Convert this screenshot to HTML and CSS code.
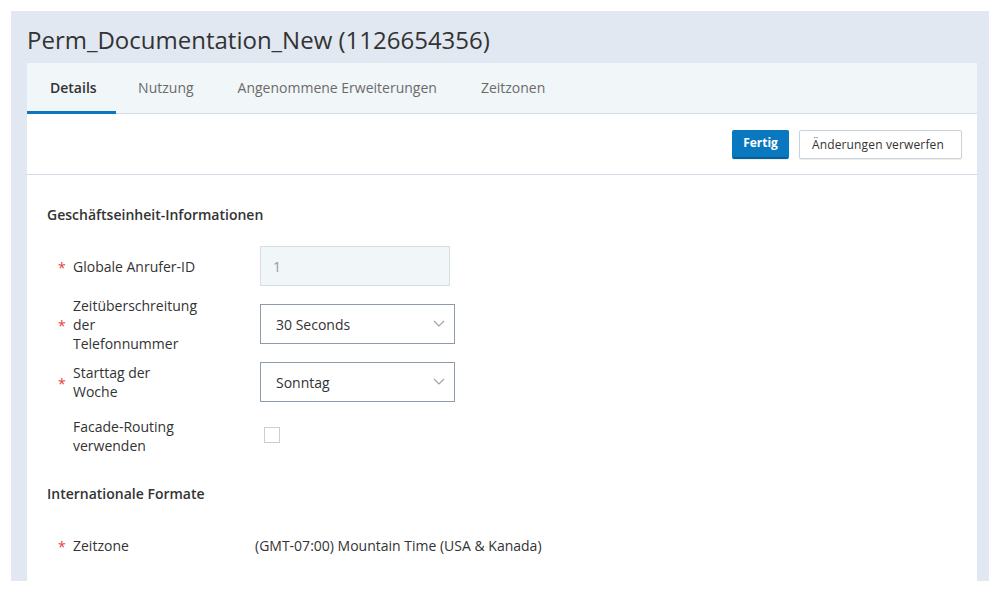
FILE: index.html
```html
<!DOCTYPE html>
<html lang="de">

<head>
        <meta charset="UTF-8">
        <meta name="viewport" content="width=device-width, initial-scale=1.0">
        <title>Perm_Documentation_New</title>
        <link rel="stylesheet" href="styles.css">
</head>

<body>
        <div class="page">
                <h1 class="title">Perm_Documentation_New (1126654356)</h1>

                <div class="card">
                        <nav class="tabs">
                                <a class="tab active">Details</a>
                                <a class="tab">Nutzung</a>
                                <a class="tab">Angenommene Erweiterungen</a>
                                <a class="tab">Zeitzonen</a>
                        </nav>

                        <div class="toolbar">
                                <button class="btn btn-primary">Fertig</button>
                                <button class="btn btn-secondary">Änderungen verwerfen</button>
                        </div>

                        <div class="content">
                                <h2>Geschäftseinheit-Informationen</h2>

                                <div class="row">
                                        <span class="req">*</span>
                                        <label>Globale Anrufer-ID</label>
                                        <input class="field" type="text" value="1" disabled>
                                </div>

                                <div class="row">
                                        <span class="req">*</span>
                                        <label>Zeitüberschreitung der Telefonnummer</label>
                                        <div class="select">
                                                <span>30 Seconds</span>
                                                <svg width="12" height="7" viewBox="0 0 12 7"><path d="M1 1l5 5 5-5" fill="none" stroke="#9aa5b0" stroke-width="1.2"/></svg>
                                        </div>
                                </div>

                                <div class="row">
                                        <span class="req">*</span>
                                        <label>Starttag der<br>Woche</label>
                                        <div class="select">
                                                <span>Sonntag</span>
                                                <svg width="12" height="7" viewBox="0 0 12 7"><path d="M1 1l5 5 5-5" fill="none" stroke="#9aa5b0" stroke-width="1.2"/></svg>
                                        </div>
                                </div>

                                <div class="row short">
                                        <span class="req"></span>
                                        <label>Facade-Routing verwenden</label>
                                        <span class="checkbox"></span>
                                </div>

                                <h2 class="second">Internationale Formate</h2>

                                <div class="row">
                                        <span class="req">*</span>
                                        <label>Zeitzone</label>
                                        <span class="value">(GMT-07:00) Mountain Time (USA &amp; Kanada)</span>
                                </div>
                        </div>
                </div>
        </div>
</body>

</html>
```

FILE: styles.css
```css
body {
        font-family: "Open Sans", "Noto Sans", Arial, sans-serif;
        background-color: #fff;
        color: #333;
        margin: 0;
        padding: 11px 10px 12px 11px;
}

.page {
        background-color: #e1e8f1;
        padding: 0 12px 0 16px;
        height: 570px;
        overflow: hidden;
}

.title {
        font-size: 24px;
        font-weight: 400;
        margin: 0;
        padding: 13px 0 8px 0;
        line-height: 31px;
        color: #333;
}

.card {
        background-color: #fff;
}

.tabs {
        display: flex;
        height: 50px;
        background-color: #f1f6f9;
        border-bottom: 1px solid #d5dee6;
}

.tab {
        display: flex;
        align-items: center;
        padding: 1px 21.5px 0 22.5px;
        font-size: 14px;
        color: #6b6b6b;
        border-bottom: 3px solid transparent;
        margin-bottom: -1px;
}

.tab.active {
        font-weight: 600;
        color: #333;
        border-bottom-color: #0a78be;
        padding-left: 23px;
        padding-right: 19px;
}

.toolbar {
        display: flex;
        justify-content: flex-end;
        gap: 10px;
        padding: 16px 15px 15px 0;
        border-bottom: 1px solid #d0dbe6;
}

.btn {
        font-family: inherit;
        font-size: 12px;
        height: 29px;
        padding: 0 11px;
        background-color: #fff;
        border: 1px solid #c9d3dc;
        border-radius: 2px;
        color: #333;
        box-shadow: 0 1px 1px rgba(0, 0, 0, 0.08);
}

.btn-primary {
        background-color: #0a78be;
        border-color: #0a78be;
        border-bottom: 2px solid #065f99;
        color: #fff;
        font-weight: 700;
        padding: 0 10px 3px 10px;
}

.btn-secondary {
        padding: 0 17px 0 12px;
        letter-spacing: 0.15px;
}

.content {
        padding: 30px 20px 20px 20px;
}

.content h2 {
        font-size: 14px;
        font-weight: 600;
        margin: 0 0 12px 0;
        line-height: 20px;
        color: #333;
}

.content h2.second {
        margin-top: 23px;
        margin-bottom: 12px;
}

.row {
        display: flex;
        align-items: center;
        min-height: 58px;
        padding-left: 11px;
        font-size: 14px;
}

.row.short {
        min-height: 50px;
}

.req {
        width: 15px;
        color: #e8403a;
        font-size: 14px;
        padding-top: 3px;
}

.row label {
        width: 126px;
        margin-right: 61px;
        line-height: 19px;
        color: #333;
}

.field {
        width: 190px;
        height: 40px;
        box-sizing: border-box;
        border: 1px solid #d5dee4;
        background-color: #f1f6f9;
        font-family: inherit;
        font-size: 14px;
        color: #999;
        padding: 0 12px;
}

.select {
        width: 195px;
        height: 40px;
        box-sizing: border-box;
        border: 1px solid #8c9cab;
        display: flex;
        align-items: center;
        justify-content: space-between;
        padding: 0 9px 0 15px;
        color: #333;
}

.select svg {
        margin-top: -2px;
}

.checkbox {
        width: 14px;
        height: 14px;
        border: 1px solid #c4cfd7;
        margin-left: 4px;
        margin-top: -2px;
}

.value {
        margin-left: -5px;
        color: #333;
}
```
